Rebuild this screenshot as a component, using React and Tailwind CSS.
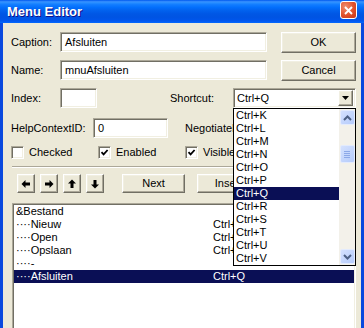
import React from "react";

const sunken =
  "bg-white border border-t-[#ACA899] border-l-[#ACA899] border-b-white border-r-white shadow-[inset_1px_1px_0_#716F64,inset_-1px_-1px_0_#F1EFE2]";
const raised =
  "bg-[#ECE9D8] border border-t-white border-l-white border-b-[#716F64] border-r-[#716F64] shadow-[inset_-1px_-1px_0_#ACA899,inset_1px_1px_0_#F1EFE2]";

function Field({ w, children }) {
  return (
    <div className={`${sunken} ${w} h-[20px] flex items-center pl-[4px]`}>
      {children}
    </div>
  );
}

function Btn({ cls, children }) {
  return (
    <div className={`${raised} ${cls} flex items-center justify-center`}>
      {children}
    </div>
  );
}

function Check({ checked, label, w }) {
  return (
    <div className={`${w} flex items-center h-[13px]`}>
      <div className={`${sunken} w-[13px] h-[13px] flex items-center justify-center`}>
        {checked && (
          <svg width="9" height="9" viewBox="0 0 9 9">
            <path d="M1.5 4.2 L3.6 6.4 L7.6 2" fill="none" stroke="#000" strokeWidth="1.8" />
          </svg>
        )}
      </div>
      <span className="ml-[5px]">{label}</span>
    </div>
  );
}

function Arrow({ d }) {
  return (
    <Btn cls="w-[18px] h-[19px]">
      <svg width="10" height="10" viewBox="0 0 10 10">
        <path d={d} fill="#000" />
      </svg>
    </Btn>
  );
}

function ScrollBtn({ up }) {
  return (
    <div className="w-[15px] h-[15px] mx-auto rounded-[2px] border border-[#E3EBFD] bg-[linear-gradient(135deg,#D4E1FE,#B5CBFB)] flex items-center justify-center">
      <svg width="9" height="6" viewBox="0 0 9 6">
        <path
          d={up ? "M1 5 L4.5 1.5 L8 5" : "M1 1 L4.5 4.5 L8 1"}
          fill="none"
          stroke="#4D6185"
          strokeWidth="2"
        />
      </svg>
    </div>
  );
}

const listRows = [
  ["&Bestand", "", false],
  ["····Nieuw", "Ctrl+N", false],
  ["····Open", "Ctrl+O", false],
  ["····Opslaan", "Ctrl+S", false],
  ["····-", "", false],
  ["····Afsluiten", "Ctrl+Q", true],
];

const shortcuts = ["K", "L", "M", "N", "O", "P", "Q", "R", "S", "T", "U", "V"];

export default function App() {
  return (
    <div className="w-[364px] h-[328px] overflow-hidden flex flex-col bg-[#0A49DE] font-['Liberation_Sans',Arial,sans-serif]">
      {/* Title bar */}
      <div className="h-[23px] shrink-0 flex items-start justify-between pl-[7px] pr-[7px] -mx-0 bg-[linear-gradient(180deg,#0058EE_0%,#3A93FF_8%,#288EFF_12%,#127DFF_20%,#036FFC_32%,#0262EE_45%,#0057E5_60%,#0054E3_75%,#0055EB_88%,#005BF5_94%,#026AFE_100%)]">
        <span className="text-white font-bold text-[13px] leading-[23px] [text-shadow:1px_1px_#0F1089]">
          Menu Editor
        </span>
        <div className="mt-[1px] w-[17px] h-[18px] rounded-[3px] border border-white bg-[radial-gradient(circle_at_30%_30%,#F08E6E,#E0502A_55%,#C4361B)] flex items-center justify-center">
          <svg width="9" height="9" viewBox="0 0 9 9">
            <path d="M1 1 L8 8 M8 1 L1 8" stroke="#fff" strokeWidth="1.9" />
          </svg>
        </div>
      </div>

      {/* Body */}
      <div className="flex-1 mx-[3px] bg-[#ECE9D8] relative overflow-hidden pl-[8px] text-[11px] leading-[13px] text-black">
        {/* Caption */}
        <div className="mt-[9px] flex items-start">
          <div className="w-[49px] h-[20px] flex items-center">Caption:</div>
          <Field w="w-[207px]">Afsluiten</Field>
          <Btn cls="ml-[14px] w-[75px] h-[21px]">OK</Btn>
        </div>
        {/* Name */}
        <div className="mt-[7px] flex items-start">
          <div className="w-[49px] h-[20px] flex items-center">Name:</div>
          <Field w="w-[207px]">mnuAfsluiten</Field>
          <Btn cls="ml-[14px] w-[75px] h-[21px]">Cancel</Btn>
        </div>
        {/* Index / Shortcut */}
        <div className="mt-[7px] flex items-start">
          <div className="w-[49px] h-[20px] flex items-center">Index:</div>
          <Field w="w-[37px]"></Field>
          <div className="ml-[73px] w-[63px] h-[20px] flex items-center">Shortcut:</div>
          <div className={`${sunken} w-[123px] h-[20px] flex items-center justify-between pl-[3px] pr-[2px]`}>
            <span>Ctrl+Q</span>
            <Btn cls="w-[15px] h-[16px]">
              <svg width="7" height="4" viewBox="0 0 7 4">
                <path d="M0 0 L7 0 L3.5 4 Z" fill="#000" />
              </svg>
            </Btn>
          </div>
        </div>
        {/* HelpContextID */}
        <div className="mt-[10px] flex items-start">
          <div className="w-[82px] h-[20px] flex items-center">HelpContextID:</div>
          <Field w="w-[75px]">0</Field>
          <div className="ml-[17px] h-[20px] flex items-center whitespace-nowrap">NegotiatePosition:</div>
        </div>
        {/* Checkboxes */}
        <div className="mt-[8px] flex items-center">
          <Check w="w-[87px]" label="Checked" />
          <Check w="w-[87px]" label="Enabled" checked />
          <Check w="w-[90px]" label="Visible" checked />
        </div>
        {/* Separator */}
        <div className="mt-[7px] ml-[1px] w-[344px] h-[2px] border-t border-t-[#ACA899] border-b border-b-white" />
        {/* Buttons */}
        <div className="mt-[6px] ml-[6px] flex items-start">
          <div className="flex gap-[5px]">
            <Arrow d="M0.5 5 L4.5 1 L4.5 3.5 L9 3.5 L9 6.5 L4.5 6.5 L4.5 9 Z" />
            <Arrow d="M9.5 5 L5.5 1 L5.5 3.5 L1 3.5 L1 6.5 L5.5 6.5 L5.5 9 Z" />
            <Arrow d="M5 0.5 L1 4.5 L3.5 4.5 L3.5 9 L6.5 9 L6.5 4.5 L9 4.5 Z" />
            <Arrow d="M5 9.5 L1 5.5 L3.5 5.5 L3.5 1 L6.5 1 L6.5 5.5 L9 5.5 Z" />
          </div>
          <Btn cls="ml-[18px] w-[63px] h-[19px]">Next</Btn>
          <Btn cls="ml-[12px] w-[63px] h-[19px]">Insert</Btn>
        </div>
        {/* Menu list */}
        <div className={`${sunken} mt-[10px] ml-[1px] w-[344px] h-[140px] pt-[1px] px-[1px]`}>
          {listRows.map(([name, sc, sel]) => (
            <div
              key={name}
              className={`h-[13px] flex items-center pl-[2px] whitespace-nowrap ${sel ? "bg-[#0A0F55] text-white" : ""}`}
            >
              <span className="w-[197px]">{name}</span>
              <span>{sc}</span>
            </div>
          ))}
        </div>

        {/* Open shortcut dropdown */}
        <div className="absolute left-[230px] top-[85px] w-[123px] h-[158px] border border-black bg-white flex">
          <div className="w-[105px]">
            {shortcuts.map((k) => (
              <div
                key={k}
                className={`h-[13px] flex items-center pl-[2px] ${k === "Q" ? "bg-[#0A0F55] text-white" : ""}`}
              >
                Ctrl+{k}
              </div>
            ))}
          </div>
          <div className="w-[16px] flex flex-col bg-[#F3F1EA] pt-[1px] pb-[1px]">
            <ScrollBtn up />
            <div className="flex-1">
              <div className="mt-[20px] w-[15px] h-[18px] mx-auto rounded-[2px] border border-[#E3EBFD] bg-[linear-gradient(135deg,#D4E1FE,#B5CBFB)] flex flex-col items-center justify-center gap-[1px]">
                <div className="w-[6px] h-[1px] bg-[#8CA8E8]" />
                <div className="w-[6px] h-[1px] bg-[#8CA8E8]" />
                <div className="w-[6px] h-[1px] bg-[#8CA8E8]" />
                <div className="w-[6px] h-[1px] bg-[#8CA8E8]" />
              </div>
            </div>
            <ScrollBtn />
          </div>
        </div>
      </div>
    </div>
  );
}
